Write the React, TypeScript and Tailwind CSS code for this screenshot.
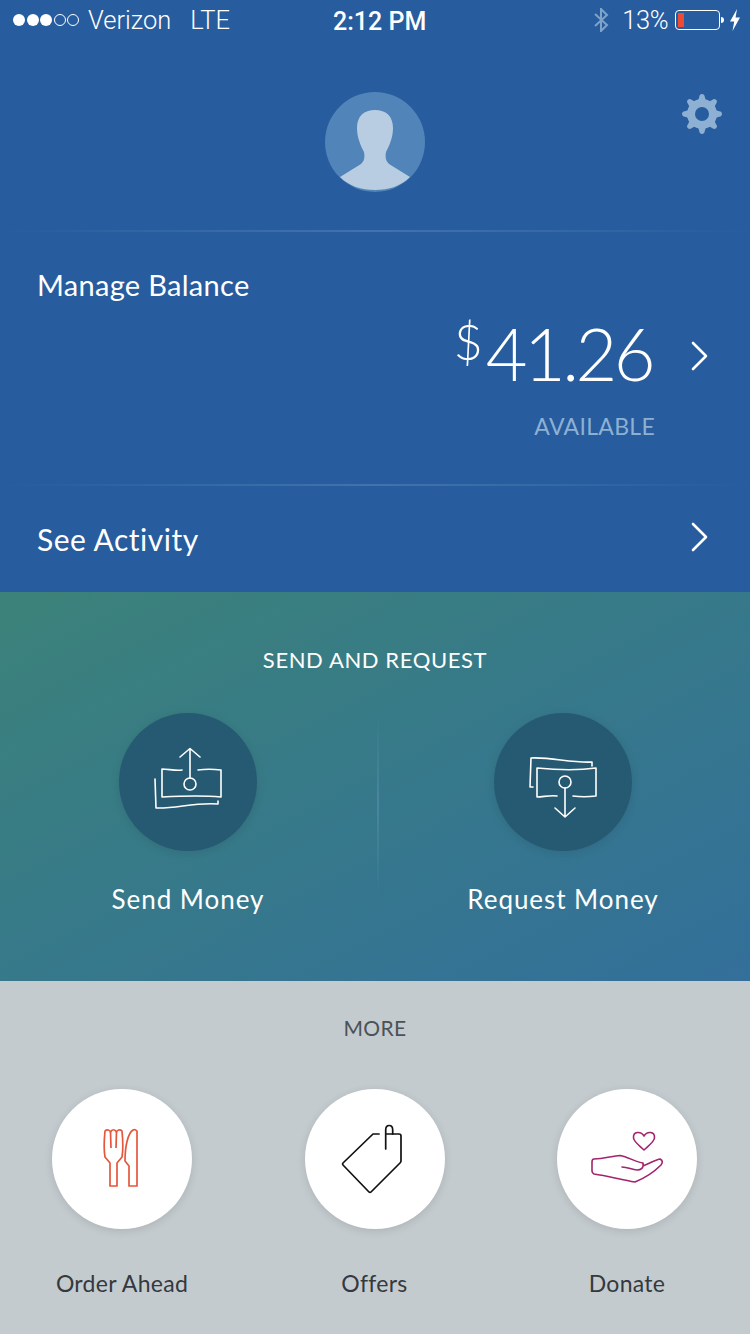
const font = { fontFamily: "Lato, 'Open Sans', sans-serif" }

function Chevron({ className = "" }: { className?: string }) {
  return (
    <svg viewBox="0 0 20 32" className={`w-5 h-8 ${className}`} fill="none" stroke="white" strokeWidth="2.6" strokeLinecap="round" strokeLinejoin="round">
      <path d="M4 3 L17 16 L4 29" />
    </svg>
  )
}

function StatusBar() {
  return (
    <div className="relative flex items-center justify-between h-10 pl-[13px] pr-[9px] text-white text-[25.5px] font-['Roboto',sans-serif]">
      <div className="flex items-center">
        <div className="flex items-center gap-[1.5px]">
          <span className="w-[12px] h-[12px] rounded-full bg-white" />
          <span className="w-[12px] h-[12px] rounded-full bg-white" />
          <span className="w-[12px] h-[12px] rounded-full bg-white" />
          <span className="w-[12px] h-[12px] rounded-full border border-white" />
          <span className="w-[12px] h-[12px] rounded-full border border-white" />
        </div>
        <span className="ml-[9px] font-light">Verizon</span>
        <span className="ml-[19px] font-light">LTE</span>
      </div>
      <span className="absolute left-[333px] top-[3px] text-[25px] font-medium">2:12 PM</span>
      <div className="flex items-center">
        <svg viewBox="0 0 16 24" className="w-[16px] h-[24px] mr-[13px]" fill="none" stroke="#7fa3c9" strokeWidth="2">
          <path d="M2 6 L14 17 L8 23 V1 L14 7 L2 18" />
        </svg>
        <span className="font-light tracking-[-0.5px]">13%</span>
        <div className="ml-[7px] w-[45px] h-[20px] rounded-[4px] border border-white p-[2px]">
          <div className="w-[6px] h-full bg-[#ee4b35]" />
        </div>
        <span className="w-[3px] h-[6px] bg-white rounded-r-sm ml-[1px]" />
        <svg viewBox="0 0 12 22" className="w-[12px] h-[22px] ml-[5px]" fill="white">
          <path d="M8 0 L1 12.5 H5.2 L3.5 22 L11 8.5 H6.6 Z" />
        </svg>
      </div>
    </div>
  )
}

function Divider() {
  return <div className="h-[2px] bg-gradient-to-r from-transparent via-[#4273ab] to-transparent" />
}

function Gear() {
  const teeth = [0, 45, 90, 135, 180, 225, 270, 315]
  return (
    <svg viewBox="-22 -22 44 44" className="absolute right-[26px] top-[52px] w-[44px] h-[44px]" fill="#8eb0d3">
      {teeth.map((deg) => (
        <path key={deg} transform={`rotate(${deg})`} d="M-4 -13 L-2.2 -19 Q0 -21 2.2 -19 L4 -13 Z" />
      ))}
      <circle r="11" fill="none" stroke="#8eb0d3" strokeWidth="8" />
    </svg>
  )
}

function SendIcon() {
  return (
    <svg viewBox="148 742 80 80" className="w-20 h-20" fill="none" stroke="white" strokeWidth="1.6" strokeLinecap="round" strokeLinejoin="round">
      <path d="M182 770 C176 771 168 769 162 769 V797 C180 796 200 795 221 797 V770 C213 769 205 769 198 770" />
      <path d="M155 779 L156 808 C175 809 195 802 218 804 V801" />
      <path d="M190 778 V749 M180 757 L190 748.5 L200 757" />
      <circle cx="190" cy="784" r="6" />
    </svg>
  )
}

function RequestIcon() {
  return (
    <svg viewBox="523 742 80 80" className="w-20 h-20" fill="none" stroke="white" strokeWidth="1.6" strokeLinecap="round" strokeLinejoin="round">
      <path d="M533 787 H530 L531 758 C552 757 570 763 592 762 V766" />
      <path d="M557 796 C550 795 543 797 537 797 V768 C556 770 576 771 596 768 V796 C588 797 580 797 573 796" />
      <path d="M565 788 V817 M555 808 L565 817 L575 808" />
      <circle cx="565" cy="782" r="6" />
    </svg>
  )
}

function ForkKnife() {
  return (
    <svg viewBox="82 1118 80 80" className="w-20 h-20" fill="none" stroke="#e4573d" strokeWidth="1.7" strokeLinejoin="round">
      <path d="M105 1130 C104 1140 104 1150 105 1156 L110 1162 V1185 H117 V1162 L122 1156 C123 1150 123 1140 122 1130 C120 1128 117 1129 116.5 1131 C115 1128 112 1128 110.5 1131 C110 1129 107 1128 105 1130 Z" />
      <path d="M110.5 1131 L111 1147 M116.5 1131 L116 1147" />
      <path d="M137 1185 V1130 Q135 1128 133 1129 C128 1132 125 1145 125 1160 L129 1165 V1185 Z" />
    </svg>
  )
}

function TagIcon() {
  return (
    <svg viewBox="335 1118 80 80" className="w-20 h-20" fill="none" stroke="#111" strokeWidth="1.7" strokeLinecap="round" strokeLinejoin="round">
      <path d="M379 1133 H373 L343 1162 Q342 1163 343 1164 L369 1191 Q370 1192 371 1191 L400 1162 Q401 1161 401 1160 V1135 Q401 1133 399 1133 H386" />
      <path d="M385.7 1148 V1129 C385.7 1123 392.7 1123 392.7 1129 V1133" />
    </svg>
  )
}

function HandIcon() {
  return (
    <svg viewBox="587 1118 80 80" className="w-20 h-20" fill="none" stroke="#a1246c" strokeWidth="1.6" strokeLinecap="round" strokeLinejoin="round">
      <path d="M644 1135 C641 1130 633 1130 633.5 1137 C634 1141 640 1145 644 1149 C648 1145 654 1141 654.5 1137 C655 1130 647 1130 644 1135 Z" />
      <path d="M622 1166 C628 1166 632 1169 637 1169 C641 1169 644 1167 643 1162 C636 1161 628 1156 620 1154.5 C612 1155 604 1158 594 1158 Q592 1158 592 1161 L592 1170 Q592 1172 594 1173 C608 1175 622 1179 635 1181 C645 1177 655 1170 661 1164 Q664 1160 660 1158 C655 1159 648 1163 643 1165" />
    </svg>
  )
}

function MoreItem({ label, icon }: { label: string; icon: React.ReactNode }) {
  return (
    <div className="flex flex-col items-center w-[140px]">
      <div className="flex items-center justify-center w-[140px] h-[140px] rounded-full bg-white shadow-[0_2px_8px_rgba(0,0,0,0.12)]">{icon}</div>
      <span className="mt-[40px] text-[23px] leading-[28px] text-[#33393f] tracking-[0.3px]">{label}</span>
    </div>
  )
}

function ActionItem({ label, icon }: { label: string; icon: React.ReactNode }) {
  return (
    <div className="flex flex-col items-center w-[240px]">
      <div className="flex items-center justify-center w-[138px] h-[138px] rounded-full bg-[#265a73] shadow-[0_2px_10px_rgba(0,0,0,0.1)]">{icon}</div>
      <span className="mt-[33px] text-[26px] leading-[30px] text-white tracking-[0.95px]">{label}</span>
    </div>
  )
}

export default function App() {
  return (
    <div className="w-[750px] h-[1334px] overflow-hidden bg-[#c4cbcf]" style={font}>
      {/* Balance */}
      <div className="h-[592px] bg-[#275c9e]">
        <StatusBar />
        <div className="relative flex justify-center pt-[52px] pb-[38px]">
          <div className="relative w-[100px] h-[100px] rounded-full bg-[#5184b8] overflow-hidden">
            <svg viewBox="0 0 100 100" className="w-full h-full" fill="#b8cde2">
              <path d="M50 18 C39 18 32 24 32 36 C32 46 36 54 39 60 C40 66 39 69 36 72 L15 85 C24 94 36 98 50 98 C64 98 76 94 85 85 L64 72 C61 69 60 66 61 60 C64 54 68 46 68 36 C68 24 61 18 50 18 Z" />
              <path d="M15 88 C24 97 36 100 50 100 C64 100 76 97 85 88 L85 100 H15 Z" fill="#275c9e" />
            </svg>
          </div>
          <Gear />
        </div>
        <Divider />
        <div className="pl-[37px] pr-[41px] pt-[35px]">
          <div className="text-[29px] leading-[36px] text-white tracking-[0.3px]">Manage Balance</div>
          <div className="flex items-center justify-end mt-[6px]">
            <div className="flex items-start text-white font-light">
              <span className="text-[50px] leading-[56px] mt-[4px]">$</span>
              <span className="text-[72px] leading-[88px] tracking-[-3.5px] ml-[3px]">41.26</span>
            </div>
            <Chevron className="ml-[37px] mt-[6px]" />
          </div>
          <div className="pr-[54px] mt-[14px] text-right text-[23px] leading-[30px] tracking-[0.3px] text-[#8eb0d3]">AVAILABLE</div>
        </div>
        <div className="mt-[43px]">
          <Divider />
        </div>
        <div className="flex items-center justify-between pl-[37px] pr-[41px] pt-[35px]">
          <span className="text-[30px] leading-[36px] text-white tracking-[0.5px]">See Activity</span>
          <Chevron className="mb-[4px]" />
        </div>
      </div>

      {/* Send and request */}
      <div className="h-[389px] bg-gradient-to-br from-[#3c8279] to-[#336f9a] pt-[54px]">
        <div className="text-center text-[22px] leading-[28px] text-white tracking-[0.6px]">SEND AND REQUEST</div>
        <div className="relative flex justify-between pl-[68px] pr-[67px] mt-[39px]">
          <ActionItem label="Send Money" icon={<SendIcon />} />
          <div className="w-[2px] h-[180px] mt-[2px] ml-[4px] bg-gradient-to-b from-transparent via-[#4a86a0] to-transparent" />
          <ActionItem label="Request Money" icon={<RequestIcon />} />
        </div>
      </div>

      {/* More */}
      <div className="pt-[33px]">
        <div className="text-center text-[21px] leading-[28px] text-[#4b5257] tracking-[0.4px]">MORE</div>
        <div className="flex justify-between pl-[52px] pr-[53px] mt-[47px]">
          <MoreItem label="Order Ahead" icon={<ForkKnife />} />
          <MoreItem label="Offers" icon={<TagIcon />} />
          <MoreItem label="Donate" icon={<HandIcon />} />
        </div>
      </div>
    </div>
  )
}
